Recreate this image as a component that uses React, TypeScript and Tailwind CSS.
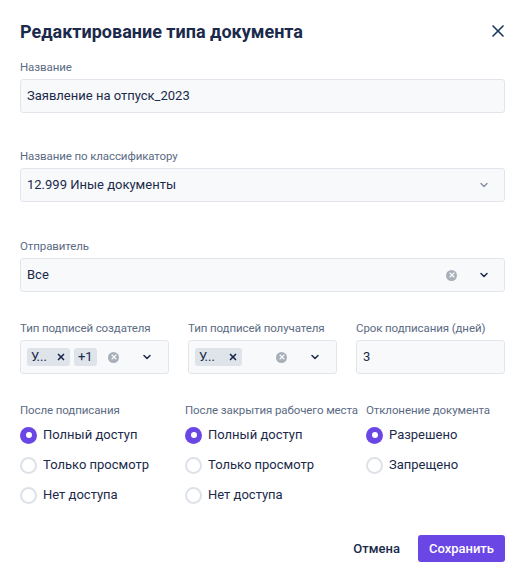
import { X, ChevronDown } from 'lucide-react';

const Label = ({ children }: { children: React.ReactNode }) => (
  <div className="h-4 mb-1 text-[11.5px] leading-4 whitespace-nowrap tracking-[-0.1px] text-[#5b6b84]">{children}</div>
);

const Field = ({ children }: { children: React.ReactNode }) => (
  <div className="h-[34px] flex items-center rounded-[3px] border border-[#e2e6ec] bg-[#f8f9fb] px-[6px] text-[13px] text-[#1b2a4a]">
    {children}
  </div>
);

const Clear = () => (
  <span className="w-[11px] h-[11px] rounded-full bg-[#a9afb9] flex items-center justify-center">
    <X size={8} strokeWidth={3.5} className="text-[#f8f9fb]" />
  </span>
);

const Chevron = ({ light }: { light?: boolean }) => (
  <ChevronDown size={12} strokeWidth={3} className={light ? 'text-[#8b94a3]' : 'text-[#1b2a4a]'} />
);

const Chip = ({ children }: { children: React.ReactNode }) => (
  <span className="h-[18px] flex items-center rounded-[3px] bg-[#dfe3ea] px-[4px] text-[13px] text-[#1b2a4a]">
    {children}
  </span>
);

const Radio = ({ label, checked }: { label: string; checked?: boolean }) => (
  <div className="h-[30px] flex items-center gap-[6px]">
    {checked ? (
      <span className="w-[17px] h-[17px] rounded-full bg-[#6a46e5] flex items-center justify-center">
        <span className="w-[6px] h-[6px] rounded-full bg-white" />
      </span>
    ) : (
      <span className="w-[17px] h-[17px] rounded-full border-2 border-[#dde1e8] bg-white" />
    )}
    <span className="text-[13px] text-[#1b2a4a]">{label}</span>
  </div>
);

const App = () => {
  return (
    <div className="w-[525px] h-[577px] bg-white px-5 pt-[19px] font-['Roboto',sans-serif]">
      {/* Header */}
      <div className="h-[24px] flex items-center justify-between">
        <h1 className="text-[18px] font-bold text-[#1b2a4a]">Редактирование типа документа</h1>
        <X size={20} strokeWidth={2} className="text-[#1b3a5f] -mr-[3px]" />
      </div>

      <div className="mt-4">
        <Label>Название</Label>
        <Field>Заявление на отпуск_2023</Field>
      </div>

      <div className="mt-[35px]">
        <Label>Название по классификатору</Label>
        <Field>
          <span className="flex-1">12.999 Иные документы</span>
          <span className="mr-[8px]"><Chevron light /></span>
        </Field>
      </div>

      <div className="mt-[36px]">
        <Label>Отправитель</Label>
        <Field>
          <span className="flex-1">Все</span>
          <span className="mr-[21px]"><Clear /></span>
          <span className="mr-[8px]"><Chevron /></span>
        </Field>
      </div>

      <div className="mt-[28px] grid grid-cols-3 gap-[19px]">
        <div>
          <Label>Тип подписей создателя</Label>
          <Field>
            <div className="flex-1 flex items-center gap-[4px]">
              <Chip>
                <span className="mr-[9px]">У...</span>
                <X size={10} strokeWidth={4} />
              </Chip>
              <Chip>+1</Chip>
            </div>
            <span className="mr-[22px]"><Clear /></span>
            <span className="mr-[9px]"><Chevron /></span>
          </Field>
        </div>
        <div>
          <Label>Тип подписей получателя</Label>
          <Field>
            <div className="flex-1 flex items-center">
              <Chip>
                <span className="mr-[13px]">У...</span>
                <X size={10} strokeWidth={4} />
              </Chip>
            </div>
            <span className="mr-[22px]"><Clear /></span>
            <span className="mr-[9px]"><Chevron /></span>
          </Field>
        </div>
        <div>
          <Label>Срок подписания (дней)</Label>
          <Field>3</Field>
        </div>
      </div>

      {/* Radio groups */}
      <div className="mt-[28px] flex">
        <div className="w-[165px]">
          <Label>После подписания</Label>
          <div className="-mt-[2px]">
            <Radio label="Полный доступ" checked />
            <Radio label="Только просмотр" />
            <Radio label="Нет доступа" />
          </div>
        </div>
        <div className="w-[181px]">
          <Label>После закрытия рабочего места</Label>
          <div className="-mt-[2px]">
            <Radio label="Полный доступ" checked />
            <Radio label="Только просмотр" />
            <Radio label="Нет доступа" />
          </div>
        </div>
        <div>
          <Label>Отклонение документа</Label>
          <div className="-mt-[2px]">
            <Radio label="Разрешено" checked />
            <Radio label="Запрещено" />
          </div>
        </div>
      </div>

      {/* Footer */}
      <div className="mt-[25px] flex justify-end items-center gap-[18px]">
        <button className="text-[13px] font-medium text-[#1b2a4a]">Отмена</button>
        <button className="h-[27px] px-[11px] rounded-[3px] bg-[#6a46e5] text-[13px] font-medium text-white">
          Сохранить
        </button>
      </div>
    </div>
  );
};

export default App;
